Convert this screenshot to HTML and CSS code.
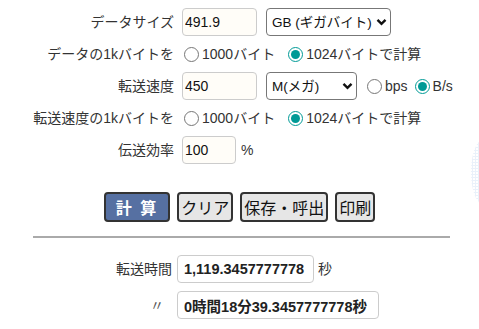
FILE: index.html
```html
<!DOCTYPE html>
<html>
	<head>
		<meta charset="utf-8">
		<title>転送時間計算</title>
		<link rel="stylesheet" href="styles.css">
	</head>
	<body>
		<div class="calc">
			<div class="form">
				<div class="lbl">データサイズ</div>
				<div class="fld">
					<input class="num" type="text" value="491.9">
					<span class="sel sel-size">
						<select class="unit">
							<option>GB (ギガバイト)</option>
						</select>
						<svg class="arrow" width="11" height="8" viewBox="0 0 11 8"><path d="M1.5 1.8 L5.5 5.8 L9.5 1.8" fill="none" stroke="#111" stroke-width="2.4"/></svg>
					</span>
				</div>

				<div class="lbl">データの1kバイトを</div>
				<div class="fld">
					<label class="rd"><input type="radio" name="k1">1000バイト</label>
					<label class="rd"><input type="radio" name="k1" checked>1024バイトで計算</label>
				</div>

				<div class="lbl">転送速度</div>
				<div class="fld">
					<input class="num" type="text" value="450">
					<span class="sel sel-speed">
						<select class="unit">
							<option>M(メガ)</option>
						</select>
						<svg class="arrow" width="11" height="8" viewBox="0 0 11 8"><path d="M1.5 1.8 L5.5 5.8 L9.5 1.8" fill="none" stroke="#111" stroke-width="2.4"/></svg>
					</span>
					<label class="rd rd-s"><input type="radio" name="bs">bps</label>
					<label class="rd rd-s"><input type="radio" name="bs" checked>B/s</label>
				</div>

				<div class="lbl">転送速度の1kバイトを</div>
				<div class="fld">
					<label class="rd"><input type="radio" name="k2">1000バイト</label>
					<label class="rd"><input type="radio" name="k2" checked>1024バイトで計算</label>
				</div>

				<div class="lbl">伝送効率</div>
				<div class="fld">
					<input class="num short" type="text" value="100">
					<span class="pct">%</span>
				</div>
			</div>

			<div class="btns">
				<button class="btn btn-main">計 算</button>
				<button class="btn">クリア</button>
				<button class="btn">保存・呼出</button>
				<button class="btn">印刷</button>
			</div>

			<hr class="line">

			<div class="result">
				<div class="lbl">転送時間</div>
				<div class="fld">
					<input class="out out1" type="text" value="1,119.3457777778" readonly>
					<span class="sec">秒</span>
				</div>
				<div class="lbl ditto">〃</div>
				<div class="fld">
					<input class="out out2" type="text" value="0時間18分39.3457777778秒" readonly>
				</div>
			</div>

			<div class="deco"></div>
		</div>
	</body>
</html>
```

FILE: styles.css
```css
*{
	margin: 0;
	padding: 0;
	box-sizing: border-box;
}
body{
	font-family: "Liberation Sans", "Noto Sans CJK JP", sans-serif;
	font-size: 14px;
	color: #333;
	background: #fff;
	overflow: hidden;
}
.calc{
	position: relative;
	width: 479px;
	height: 329px;
	padding-top: 5px;
}
.form{
	display: grid;
	grid-template-columns: 174px auto;
	grid-template-rows: 34px 30px 34px 30px 34px;
	column-gap: 8px;
	align-items: center;
}
.lbl{
	text-align: right;
	line-height: 20px;
	white-space: nowrap;
}
.fld{
	display: flex;
	align-items: center;
	line-height: 20px;
	white-space: nowrap;
}
.num{
	width: 75px;
	height: 28px;
	padding: 0 2px;
	border: 1px solid #ccc;
	border-radius: 4px;
	background: #fffdf8;
	font: 14px "Liberation Sans", "Noto Sans CJK JP", sans-serif;
	color: #111;
}
.num.short{
	width: 54px;
}
.sel{
	position: relative;
	display: block;
	margin-left: 9px;
}
.unit{
	display: block;
	width: 100%;
	height: 28px;
	padding: 0 0 0 5px;
	border: 1px solid #777;
	border-radius: 4px;
	background: #fff;
	font: 13.5px "Liberation Sans", "Noto Sans CJK JP", sans-serif;
	color: #111;
	appearance: none;
	-webkit-appearance: none;
}
.arrow{
	position: absolute;
	right: 4px;
	top: 10px;
	pointer-events: none;
}
.sel-size{
	width: 125px;
}
.sel-speed{
	width: 91px;
}
.rd{
	display: flex;
	align-items: center;
	margin-right: 11px;
}
.rd input{
	width: 15px;
	height: 15px;
	margin: 0 3px 0 2px;
	accent-color: #009a96;
}
.rd-s{
	margin-right: 5px;
}
.sel-speed + .rd{
	margin-left: 8px;
}
.pct{
	margin-left: 5px;
}
.btns{
	display: flex;
	justify-content: center;
	gap: 7px;
	margin-top: 25px;
}
.btn{
	height: 30px;
	padding: 0 2px;
	border: 2px solid #333;
	border-radius: 4px;
	background: #e6e6e6;
	font: 16px "Liberation Sans", "Noto Sans CJK JP", sans-serif;
	color: #111;
}
.btn-main{
	padding: 0 10px;
	background: #5670a2;
	color: #fff;
	font-weight: bold;
	letter-spacing: 2px;
}
.line{
	width: 417px;
	margin: 14px 0 0 33px;
	border: none;
	border-top: 2px solid #aaa;
}
.result{
	display: grid;
	grid-template-columns: 172px auto;
	column-gap: 5px;
	row-gap: 8px;
	margin-top: 17px;
	align-items: center;
}
.ditto{
	padding-right: 8px;
	color: #555;
}
.out{
	height: 28px;
	padding: 0 6px;
	border: 1px solid #ccc;
	border-radius: 4px;
	background: #fff;
	font: bold 14.5px "Liberation Sans", "Noto Sans CJK JP", sans-serif;
	color: #222;
}
.out1{
	width: 137px;
}
.out2{
	width: 202px;
}
.sec{
	margin-left: 4px;
}
.deco{
	position: absolute;
	right: -16px;
	top: 140px;
	width: 24px;
	height: 64px;
	border-radius: 50%;
	background: radial-gradient(circle, #dde8f7 1px, transparent 1.3px) 0 0 / 3px 3px;
	opacity: 0.6;
}
```
